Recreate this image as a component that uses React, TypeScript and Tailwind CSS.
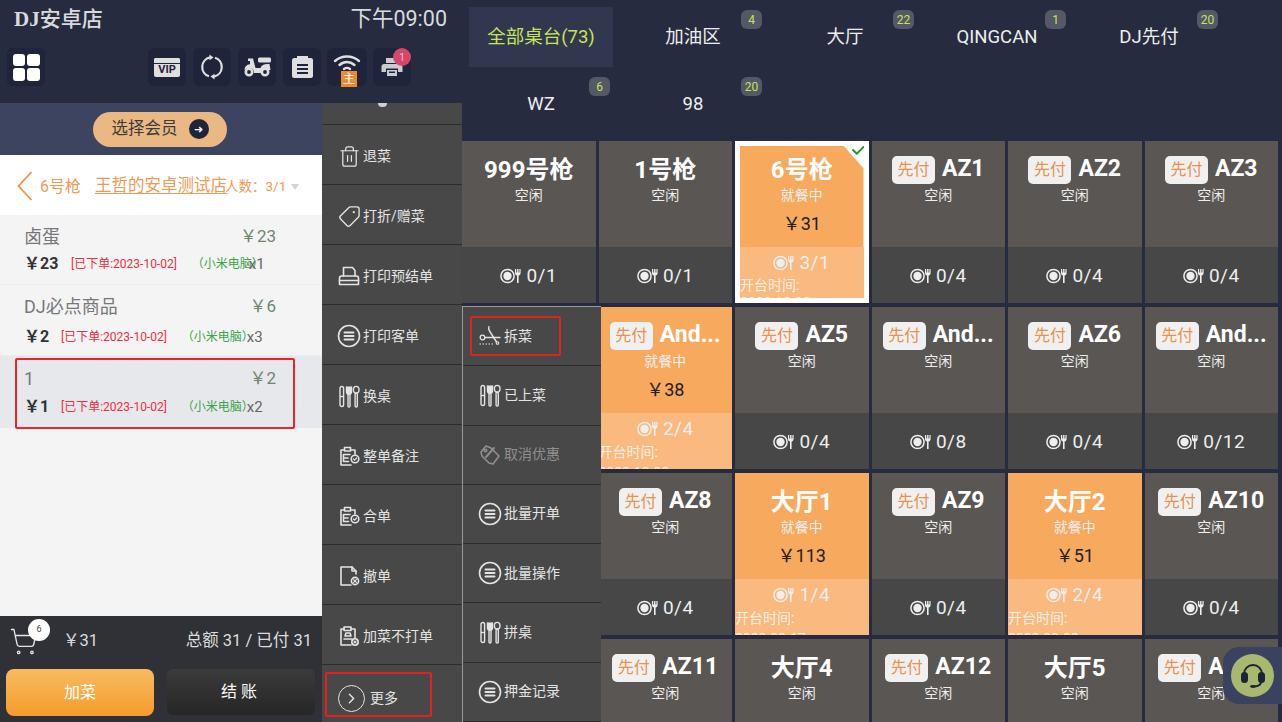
import { ReactNode } from "react";
import { Check, ChevronRight, ShoppingCart, Tag, Trash2 } from "lucide-react";

type Table = {
  name: string;
  prepay?: boolean;
  status: string;
  amount?: string;
  seats: string;
  opened?: string;
  selected?: boolean;
};

const tabs = [
  { label: "全部桌台(73)", active: true },
  { label: "加油区", count: "4" },
  { label: "大厅", count: "22" },
  { label: "QINGCAN", count: "1" },
  { label: "DJ先付", count: "20" },
  { label: "WZ", count: "6" },
  { label: "98", count: "20" },
];

const idle = (name: string, seats: string, prepay = false): Table => ({ name, seats, prepay, status: "空闲" });

const tables: Table[] = [
  idle("999号枪", "0/1"),
  idle("1号枪", "0/1"),
  { name: "6号枪", status: "就餐中", amount: "31", seats: "3/1", opened: "2023-10-02", selected: true },
  idle("AZ1", "0/4", true),
  idle("AZ2", "0/4", true),
  idle("AZ3", "0/4", true),
  idle("AZ4", "0/4", true),
  { name: "And...", prepay: true, status: "就餐中", amount: "38", seats: "2/4", opened: "2023-10-02" },
  idle("AZ5", "0/4", true),
  idle("And...", "0/8", true),
  idle("AZ6", "0/4", true),
  idle("And...", "0/12", true),
  idle("AZ7", "0/4", true),
  idle("AZ8", "0/4", true),
  { name: "大厅1", status: "就餐中", amount: "113", seats: "1/4", opened: "2023-09-17" },
  idle("AZ9", "0/4", true),
  { name: "大厅2", status: "就餐中", amount: "51", seats: "2/4", opened: "2023-09-02" },
  idle("AZ10", "0/4", true),
  idle("大厅3", "0/4"),
  idle("AZ11", "0/4", true),
  idle("大厅4", "0/4"),
  idle("AZ12", "0/4", true),
  idle("大厅5", "0/4"),
  idle("AZ13", "0/4", true),
];

const orders = [
  { name: "卤蛋", total: "23", price: "23", qty: "x1", priceW: "w-[47px]", sourceW: "ml-[15px] w-[57px]", rowMt: "mt-[2px]", h: "h-[70px]" },
  { name: "DJ必点商品", total: "6", price: "2", qty: "x3", priceW: "w-[37px]", sourceW: "ml-[15px] w-[65px]", rowMt: "mt-[5px]", h: "h-[71px]" },
];

function Svg({ children, size = 22, className = "" }: { children: ReactNode; size?: number; className?: string }) {
  return (
    <svg width={size} height={size} viewBox="0 0 24 24" fill="none" stroke="currentColor" strokeWidth="1.6" strokeLinecap="round" strokeLinejoin="round" className={className}>
      {children}
    </svg>
  );
}

const MenuCircle = () => (
  <Svg size={24}>
    <circle cx="12" cy="12" r="10.5" />
    <path d="M7.5 8.500h9M7.500 12h9M7.500 15.500h9" strokeWidth="2" />
  </Svg>
);

const Cutlery = () => (
  <svg width="21" height="23" viewBox="0 0 21 23" fill="none" stroke="currentColor" strokeWidth="1.400">
    <rect x="1" y="1.500" width="3.600" height="20" rx="1.800" />
    <path d="M1 11.500h3.600" />
    <path d="M7.500 1.500v5c0 1.800 1 2.800 2.500 2.800s2.500-1 2.500-2.800v-5" fill="currentColor" />
    <rect x="9" y="9" width="2" height="13" rx="1" />
    <ellipse cx="17.200" cy="4.800" rx="2.800" ry="3.400" />
    <rect x="16.100" y="8" width="2.200" height="14" rx="1.100" />
  </svg>
);

const Clipboard = () => (
  <Svg size={24}>
    <path d="M14 21H4V6h3.500M14 6h4v4" />
    <rect x="7.500" y="3.500" width="6" height="3.500" />
    <path d="M6.500 10.500h6.500M6.500 10.500v7h5M6.500 14h4.500" />
    <circle cx="18" cy="15" r="3.800" />
    <path d="M16.400 15l1.200 1.200 2-2.200" strokeWidth="1.200" />
  </Svg>
);

const FileX = () => (
  <Svg size={24}>
    <path d="M19 10V7l-4-4H4v18h10" />
    <path d="M15 3v4h4" />
    <circle cx="18" cy="17" r="3.600" />
    <path d="M16.600 15.600l2.800 2.800M19.400 15.600l-2.800 2.800" strokeWidth="1.200" />
  </Svg>
);

const ClipboardNote = () => (
  <Svg size={24}>
    <path d="M14 21H4V5h3M14 5h4v9" />
    <rect x="7" y="3" width="7" height="3.500" />
    <path d="M7 15h8M8 12h6l-1-3H9z" />
    <circle cx="18" cy="18" r="3.200" />
    <path d="M16.800 16.800l2.400 2.400M19.200 16.800l-2.400 2.400" strokeWidth="1.100" />
  </Svg>
);

const Scissors = () => (
  <Svg size={24}>
    <circle cx="4.500" cy="13.500" r="2.300" strokeWidth="1.300" />
    <path d="M6.800 13.500H22" strokeWidth="1.300" />
    <path d="M11 2.500c-.8 1.500-.3 3 .5 4.500l7 11" strokeWidth="1.400" />
    <circle cx="19.500" cy="19" r="1.300" strokeWidth="1.100" />
    <path d="M1.500 20h14" strokeDasharray="1.500 1.500" strokeWidth="1.100" strokeLinecap="butt" />
  </Svg>
);

const TagOff = () => (
  <Svg size={24}>
    <path d="M3 9l5-6 5 2 8 8-6 8-4-1-7-7z" />
    <path d="M8 14l8-9" strokeWidth="2" />
    <circle cx="7.500" cy="7.500" r="1.300" />
  </Svg>
);

const SeatIcon = () => (
  <svg width="21" height="16" viewBox="0 0 21 16" className="shrink-0">
    <circle cx="7.500" cy="8" r="6.600" fill="none" stroke="currentColor" strokeWidth="1.500" />
    <circle cx="7.500" cy="8" r="4.200" fill="currentColor" />
    <path d="M15 1v4c0 1.400.9 2.300 2 2.500V15h1.600V7.500c1.100-.2 2-1.100 2-2.500V1h-1.200v3.500h-.9V1h-1.400v3.500h-.9V1z" fill="currentColor" />
  </svg>
);

const PrinterOutline = () => (
  <Svg size={24}>
    <path d="M6.500 12V3.500h9l2.500 3V12" />
    <path d="M2.500 20.500v-6c0-1.200.8-2.500 2-2.500h15c1.200 0 2 1.300 2 2.500v6z" />
    <path d="M2.500 16.500h19" />
  </Svg>
);

const leftMenu = [
  { label: "退菜", icon: <Trash2 size={23} strokeWidth={1.300} /> },
  { label: "打折/赠菜", icon: <Tag size={23} strokeWidth={1.400} className="-scale-x-100" /> },
  { label: "打印预结单", icon: <PrinterOutline /> },
  { label: "打印客单", icon: <MenuCircle /> },
  { label: "换桌", icon: <Cutlery /> },
  { label: "整单备注", icon: <Clipboard /> },
  { label: "合单", icon: <Clipboard /> },
  { label: "撤单", icon: <FileX /> },
  { label: "加菜不打单", icon: <ClipboardNote /> },
];

const popupMenu = [
  { label: "拆菜", icon: <Scissors />, marked: true },
  { label: "已上菜", icon: <Cutlery /> },
  { label: "取消优惠", icon: <TagOff />, muted: true },
  { label: "批量开单", icon: <MenuCircle /> },
  { label: "批量操作", icon: <MenuCircle /> },
  { label: "拼桌", icon: <Cutlery /> },
  { label: "押金记录", icon: <MenuCircle /> },
];

function TopIcon({ children, className = "" }: { children: ReactNode; className?: string }) {
  return (
    <div className={`relative flex h-[38px] w-[38px] items-center justify-center rounded-md bg-[#20243a] text-[#dfdfdf] ${className}`}>
      {children}
    </div>
  );
}

function Header() {
  return (
    <div className="flex h-[103px] flex-col bg-[#262b40] pl-[7px] pr-[15px]">
      <div className="flex h-[48px] items-center justify-between pb-[10px] pl-[7px] text-[#d9dadd]">
        <span className="text-[21px] font-bold font-['Liberation_Serif','Noto_Sans_CJK_SC',serif]">
          DJ<span className="font-['Noto_Sans_CJK_SC',sans-serif] text-[21px] font-medium">安卓店</span>
        </span>
        <span className="text-[21.500px]">下午09:00</span>
      </div>
      <div className="flex items-start">
        <TopIcon>
          <div className="grid grid-cols-2 gap-[2px]">
            <span className="h-[12.500px] w-[12.500px] rounded-[3px] bg-white" />
            <span className="h-[12.500px] w-[12.500px] rounded-[3px] bg-white" />
            <span className="h-[12.500px] w-[12.500px] rounded-[3px] bg-white" />
            <span className="h-[12.500px] w-[12.500px] rounded-[3px] bg-white" />
          </div>
        </TopIcon>
        <div className="ml-[103px] flex gap-[7px]">
          <TopIcon>
            <div className="flex h-[19px] w-[26px] flex-col overflow-hidden rounded-[2px] bg-[#dfdfdf]">
              <span className="h-[5px] shrink-0 bg-[#dfdfdf]" />
              <span className="h-[1px] shrink-0 bg-[#20243a]" />
              <span className="text-center text-[11px] font-bold leading-[12px] text-[#20243a]">VIP</span>
            </div>
          </TopIcon>
          <TopIcon>
            <svg width="24" height="26" viewBox="0 0 24 26" fill="none" stroke="currentColor" strokeWidth="2.200">
              <path d="M15 3.700A9.800 9.800 0 0 1 14 22.600" />
              <path d="M9 22.300A9.800 9.800 0 0 1 10 3.400" />
              <path d="M9.500 0.500l4 3-4 2.800zM14.500 25.500l-4-3 4-2.800z" fill="currentColor" stroke="none" />
            </svg>
          </TopIcon>
          <TopIcon>
            <svg width="29" height="20" viewBox="0 0 29 20" fill="currentColor">
              <circle cx="6" cy="15" r="3.200" fill="none" stroke="currentColor" strokeWidth="2.600" />
              <circle cx="22" cy="15" r="3.200" fill="none" stroke="currentColor" strokeWidth="2.600" />
              <path d="M1.500 13c0-3 2-5.500 5.500-5.800V4H5V1.500h5L12.500 11h5c1-3 4-4.500 9-4l1 6H19c-1 1-1 2-1 3h-7c0-3-1.500-5-5-5-2 0-3.500 1-4.500 2z" />
              <rect x="15" y="0.500" width="13" height="5" rx="1.500" />
            </svg>
          </TopIcon>
          <TopIcon>
            <svg width="21" height="22" viewBox="0 0 21 22" fill="currentColor">
              <path fillRule="evenodd" d="M2 2h3V0h11v2h3c1 0 2 1 2 2v16c0 1-1 2-2 2H2c-1 0-2-1-2-2V4c0-1 1-2 2-2zm3 6v2h11V8zm0 4v2h11v-2zm0 4v2h11v-2z" />
            </svg>
          </TopIcon>
          <TopIcon className="mx-[-1px] w-[40px]">
            <svg width="28" height="20" viewBox="0 0 28 20" fill="none" stroke="currentColor" strokeWidth="2.400" strokeLinecap="round" className="mb-[8px]">
              <path d="M2 8c7-6 17-6 24 0M6.500 12c4.500-4 10.500-4 15 0M11 16c2-1.500 4-1.500 6 0" />
            </svg>
            <span className="absolute left-[14px] top-[23px] flex h-[16px] w-[16px] items-center justify-center bg-[#ef8a2a] text-[12px] leading-none text-white">主</span>
          </TopIcon>
          <TopIcon>
            <svg width="24" height="24" viewBox="0 0 24 24" fill="#c9cbcf">
              <path d="M6 3h12v5H6z" />
              <path fillRule="evenodd" d="M4 9h16c1.500 0 2.500 1 2.500 2.500V17H18v-3.500H6V17H1.500v-5.500C1.500 10 2.500 9 4 9z" />
              <path fillRule="evenodd" d="M7 15h10v6H7zm2 1.500V18h6v-1.500z" />
            </svg>
            <span className="absolute left-[20px] top-0 flex h-[18px] w-[18px] items-center justify-center rounded-full bg-[#d9466b] text-[10px] text-[#f7c4d0]">1</span>
          </TopIcon>
        </div>
      </div>
    </div>
  );
}

function OrderPanel() {
  return (
    <div className="flex h-full w-[322px] flex-col bg-[#f4f4f5]">
      <div className="flex h-[52px] items-center justify-center bg-[#3c4460] pr-[2px]">
        <div className="flex h-[35px] w-[134px] items-center justify-center gap-[11px] rounded-full bg-[#e9b883] text-[16.500px] text-[#3c3c3c]">
          选择会员
          <span className="flex h-[20px] w-[20px] items-center justify-center rounded-full bg-[#20243a] text-[11px] leading-none text-white">➜</span>
        </div>
      </div>
      <div className="flex h-[60px] items-center bg-white pl-[17px] pt-[3px] text-[#ef9a55]">
        <svg width="16" height="30" viewBox="0 0 16 30" fill="none" stroke="#f0914a" strokeWidth="1.800" className="-mt-[2px]">
          <path d="M14.500 1L1.500 15l13 14" />
        </svg>
        <span className="ml-[7px] w-[55px] text-[16px]">6号枪</span>
        <span className="w-[133px] whitespace-nowrap text-[16.500px] underline underline-offset-2">王哲的安卓测试店</span>
        <span className="-ml-[3px] w-[66px] whitespace-nowrap text-[13.500px]">人数：3/1</span>
        <span className="h-0 w-0 border-x-[4px] border-t-[6px] border-x-transparent border-t-[#d5d5d5]" />
      </div>

      {orders.map((o) => (
        <OrderItem key={o.name} {...o} />
      ))}
      <div className="relative flex h-[72px] flex-col bg-[#e7e8ec] pl-[24px] pt-[9px]">
        <div className="flex items-center justify-between pr-[46px] text-[#777]">
          <span className="text-[18px]">1</span>
          <span className="text-[17px] text-[#6f8570]">￥2</span>
        </div>
        <div className="mt-[3px] flex items-center">
          <span className="w-[37px] text-[16px] font-bold text-[#333]">￥1</span>
          <span className="text-[12px] text-[#ef2f3c]">[已下单:2023-10-02]</span>
          <span className="ml-[15px] w-[65px] whitespace-nowrap text-[12px] text-[#39a449]">（小米电脑）</span>
          <span className="text-[15px] text-[#666]">x2</span>
        </div>
        <span className="absolute left-[15px] top-[2px] h-[71px] w-[280px] rounded-[2px] border-2 border-[#e8262a]" />
      </div>

      <div className="mt-auto flex h-[106px] flex-col bg-[#2f3136] px-[6px]">
        <div className="flex h-[50px] items-center text-[16.500px] text-[#ddd]">
          <div className="relative ml-[3px] w-[30px]">
            <ShoppingCart size={29} strokeWidth={1.100} className="text-[#e6e6e6]" />
            <span className="absolute left-[19px] top-[-8px] flex h-[22px] w-[22px] items-center justify-center rounded-full bg-white text-[9px] text-[#444]">6</span>
          </div>
          <span className="ml-[24px]">￥31</span>
          <span className="ml-auto mr-[4px]">总额 31 / 已付 31</span>
        </div>
        <div className="mt-[3px] flex gap-[13px]">
          <button className="h-[47px] w-[148px] rounded-lg bg-gradient-to-b from-[#f8bb60] to-[#f49c28] text-[16px] text-white">加菜</button>
          <button className="h-[46px] w-[148px] rounded-md bg-gradient-to-b from-[#3b3b3b] to-[#262626] text-[16px] tracking-[4px] text-white">结账</button>
        </div>
      </div>
    </div>
  );
}

function OrderItem(o: (typeof orders)[number]) {
  return (
    <div className={`flex flex-col border-b border-[#ededee] pl-[24px] pt-[8px] ${o.h}`}>
      <div className="flex items-center justify-between pr-[46px] text-[#777]">
        <span className="text-[18px]">{o.name}</span>
        <span className="text-[17px] text-[#6f8570]">￥{o.total}</span>
      </div>
      <div className={`flex items-center ${o.rowMt}`}>
        <span className={`text-[16px] font-bold text-[#333] ${o.priceW}`}>￥{o.price}</span>
        <span className="text-[12px] text-[#ef2f3c]">[已下单:2023-10-02]</span>
        <span className={`whitespace-nowrap text-[12px] text-[#39a449] ${o.sourceW}`}>（小米电脑）</span>
        <span className="text-[15px] text-[#666]">{o.qty}</span>
      </div>
    </div>
  );
}

function SideMenu() {
  return (
    <div className="flex h-full w-[140px] flex-col bg-[#484848] text-[#e4e4e4]">
      <div className="flex h-[22px] justify-center border-b border-[#2c2c2c]">
        <span className="-ml-[20px] h-[4px] w-[9px] rounded-b-full bg-[#cfcfcf]" />
      </div>
      {leftMenu.map((m) => (
        <MenuRow key={m.label} label={m.label} icon={m.icon} className="h-[60px] pl-[15px] pt-[3px]" />
      ))}
      <div className="relative flex flex-1 items-center pl-[16px] pt-[9px] text-[14px]">
        <span className="relative flex h-[27px] w-[27px] items-center justify-center rounded-full border-[1.500px] border-[#e4e4e4]">
          <ChevronRight size={17} strokeWidth={2} />
        </span>
        <span className="ml-[5px]">更多</span>
        <span className="absolute left-[3px] top-[7px] h-[45px] w-[107px] rounded-[2px] border-2 border-[#e5201f]" />
      </div>
    </div>
  );
}

function MenuRow({ label, icon, className = "", muted, marked }: { label: string; icon: ReactNode; className?: string; muted?: boolean; marked?: boolean }) {
  return (
    <div className={`relative flex items-center gap-[2px] border-b border-[#2c2c2c] text-[14px] ${muted ? "text-[#8f8f8f]" : ""} ${className}`}>
      <span className="flex w-[24px] justify-center">{icon}</span>
      <span>{label}</span>
      {marked && <span className="absolute left-[7px] top-[9px] h-[40px] w-[91px] rounded-[2px] border-2 border-[#d9261f]" />}
    </div>
  );
}

function TableCard({ t }: { t: Table }) {
  const busy = !!t.amount;
  return (
    <div className={`relative flex h-[162px] flex-col overflow-hidden ${t.selected ? "border-[5px] border-white bg-white" : ""} text-white`}>
      <div className={`flex flex-col items-center ${t.selected ? "h-[101px] pt-[9px] [clip-path:polygon(0_0,84%_0,100%_22%,100%_100%,0_100%)]" : "h-[106px] pt-[14px]"} ${busy ? "bg-[#f7a95e]" : "bg-[#5a5653]"}`}>
        <div className="flex h-[29px] items-center gap-[7px]">
          {t.prepay && (
            <span className="flex h-[28px] w-[43px] items-center justify-center rounded-[5px] bg-[#f0f0f0] text-[16px] text-[#e8924f]">先付</span>
          )}
          <span className={`font-bold ${t.prepay ? "text-[23px]" : "text-[24px]"}`}>{t.name}</span>
        </div>
        <span className="mt-[1px] text-[14px] leading-[20px] text-[#eee]">{t.status}</span>
        {t.amount && <span className="mt-[6px] text-[18px] leading-[26px] text-[#222]">￥{t.amount}</span>}
      </div>
      <div className={`flex flex-1 flex-col overflow-hidden ${busy ? "bg-[#fab97e] pt-[4px]" : "justify-center bg-[#474747] pt-[2px]"}`}>
        <div className="flex items-center justify-center gap-[5px] text-[19px] leading-[24px] tracking-[0.5px] text-[#eee]">
          <SeatIcon />
          {t.seats}
        </div>
        {t.opened && (
          <span className={`mt-[1px] text-[14px] text-[#fdf0e2] ${t.selected ? "leading-[18px]" : "leading-[21px]"}`}>
            开台时间:
            <br />
            {t.opened}
          </span>
        )}
      </div>
      {t.selected && <Check size={18} strokeWidth={2.500} className="absolute right-[-4px] top-[-5px] text-[#129a2a]" />}
    </div>
  );
}

function TablePanel() {
  return (
    <div className="flex h-full flex-1 flex-col overflow-hidden">
      <div className="grid h-[141px] shrink-0 grid-cols-[repeat(5,152px)] grid-rows-[67px_67px] pl-[3px] pt-[3px]">
        {tabs.map((tab) => (
          <div key={tab.label} className="relative flex items-center justify-center">
            <div className={`flex h-[60px] w-[144px] items-center justify-center pt-[3px] text-[18.500px] ${tab.active ? "bg-[#31374f] text-[#c6e35a]" : "text-[#eeeeee]"}`}>
              {tab.label}
            </div>
            {tab.count && (
              <span className="absolute left-[124px] top-[7px] flex h-[19px] min-w-[21px] items-center justify-center rounded-md bg-[#555965] px-[1px] text-[12px] text-[#c6e35a]">
                {tab.count}
              </span>
            )}
          </div>
        ))}
      </div>
      <div className="grid shrink-0 grid-cols-6 gap-x-[3px] gap-y-[4px] pr-[4px]">
        {tables.map((t, i) => (
          <TableCard key={i} t={t} />
        ))}
      </div>
    </div>
  );
}

export default function App() {
  return (
    <div className="relative flex h-[722px] w-[1282px] overflow-hidden bg-[#262b40] font-['Roboto','Noto_Sans_CJK_SC',sans-serif]">
      <div className="flex h-full w-[462px] shrink-0 flex-col">
        <Header />
        <div className="flex min-h-0 flex-1">
          <OrderPanel />
          <SideMenu />
        </div>
      </div>
      <TablePanel />

      {/* popup from 更多, sits over the first table column */}
      <div className="absolute left-[462px] top-[306px] flex h-[416px] w-[139px] flex-col border-l border-t border-[#9b9b9b] bg-[#484848] text-[#e4e4e4]">
        {popupMenu.map((m) => (
          <MenuRow key={m.label} label={m.label} icon={m.icon} muted={m.muted} marked={m.marked} className="h-[59.700px] pl-[15px]" />
        ))}
      </div>

      {/* floating service button */}
      <div className="absolute left-[1223px] top-[647px] flex h-[57px] w-[59px] items-center rounded-l-2xl bg-[#3b4260] pl-[8px]">
        <span className="flex h-[43px] w-[43px] items-center justify-center rounded-full bg-[#a9b86f]">
          <svg width="28" height="28" viewBox="0 0 28 28" fill="none" stroke="#1c2238" strokeWidth="2">
            <path d="M5 15v-3a9 9 0 0 1 18 0v3" />
            <rect x="3" y="11" width="5" height="9" rx="2.500" fill="#1c2238" />
            <rect x="20" y="11" width="5" height="9" rx="2.500" fill="#1c2238" />
            <path d="M22 20c0 3-3 4-6 4.500" />
            <ellipse cx="14" cy="24.500" rx="3" ry="1.400" fill="#1c2238" stroke="none" />
          </svg>
        </span>
      </div>
    </div>
  );
}
